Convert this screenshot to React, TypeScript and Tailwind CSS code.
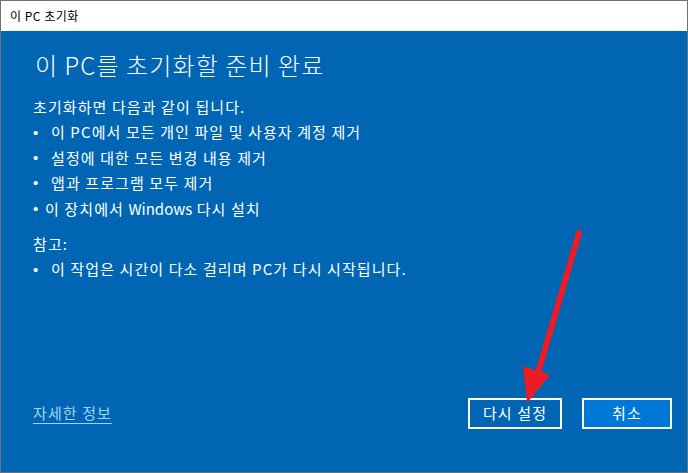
import React from "react";

const font = { fontFamily: '"Noto Sans CJK KR", "Noto Sans", sans-serif' };

function Bullet({ gap, children }: { gap: string; children: React.ReactNode }) {
  return (
    <div className="flex items-center h-[25.4px]">
      <span className={`${gap} font-['Liberation_Sans',sans-serif] text-[15px] leading-none tracking-normal`}>•</span>
      <span>{children}</span>
    </div>
  );
}

export default function App() {
  return (
    <div
      className="relative w-[688px] h-[473px] border border-[#707070] flex flex-col bg-[#0066b3] overflow-hidden"
      style={font}
    >
      <div className="h-[30px] bg-white flex items-center pl-[9px] text-[12px] tracking-[0.5px] text-black shrink-0">
        이 PC 초기화
      </div>
      <div className="flex-1 flex flex-col pl-[32px] pr-[15px] pt-[18px] pb-[43px] text-white">
        <h1 className="text-[24px] leading-[32px] font-light tracking-[1.1px] pl-[2px]">이 PC를 초기화할 준비 완료</h1>
        <div className="mt-[13px] text-[15px] leading-[25.4px] tracking-[1.1px]">
          <div className="h-[25.4px]">초기화하면 다음과 같이 됩니다.</div>
          <Bullet gap="w-[18px]">이 PC에서 모든 개인 파일 및 사용자 계정 제거</Bullet>
          <Bullet gap="w-[18px]">설정에 대한 모든 변경 내용 제거</Bullet>
          <Bullet gap="w-[18px]">앱과 프로그램 모두 제거</Bullet>
          <Bullet gap="w-[12px]">
            이 장치에서 <span className="tracking-normal">Windows</span> 다시 설치
          </Bullet>
          <div className="h-[25.4px] mt-[10px]">참고:</div>
          <Bullet gap="w-[18px]">이 작업은 시간이 다소 걸리며 PC가 다시 시작됩니다.</Bullet>
        </div>
        <div className="mt-auto flex items-center">
          <span className="text-[15px] tracking-[1.1px] text-[#a3d2f5] underline underline-offset-[4px] decoration-1">
            자세한 정보
          </span>
          <div className="ml-auto flex gap-[20px]">
            <button className="w-[94px] h-[31px] border-2 border-white bg-[#0066b3] text-white text-[15px] tracking-[1.1px] flex items-center justify-center">
              다시 설정
            </button>
            <button className="w-[90px] h-[31px] border-2 border-white bg-[#0078d7] text-white text-[15px] tracking-[1.1px] flex items-center justify-center">
              취소
            </button>
          </div>
        </div>
      </div>
      <svg
        className="absolute left-0 top-0 pointer-events-none"
        width="688"
        height="473"
        viewBox="0 0 688 473"
      >
        <line x1="578" y1="232" x2="537" y2="372" stroke="#ed1c24" strokeWidth="6" strokeLinecap="round" />
        <polygon points="522,365 549,374 526,402" fill="#ed1c24" />
      </svg>
    </div>
  );
}
